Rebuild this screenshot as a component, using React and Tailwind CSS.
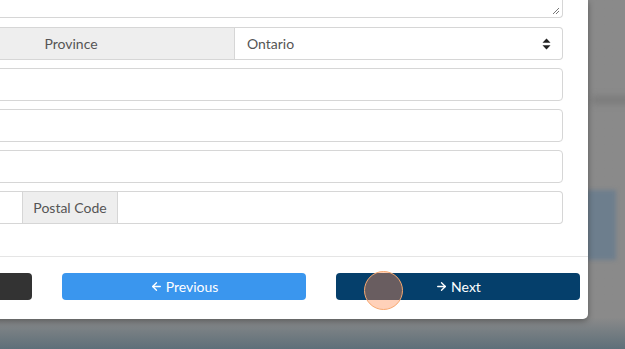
import React from "react";
import { ArrowLeft, ArrowRight } from "lucide-react";

const font = { fontFamily: "Lato, 'Open Sans', sans-serif" };

const Input = ({ className = "" }) => (
  <div className={`h-full bg-white border border-[#d6d6d6] ${className}`} />
);

const SortIcon = () => (
  <svg width="9" height="12" viewBox="0 0 9 12" className="fill-[#222]">
    <path d="M4.5 0.5 L8.5 4.8 L0.5 4.8 Z" />
    <path d="M4.5 11.5 L8.5 7.2 L0.5 7.2 Z" />
  </svg>
);

export default function App() {
  return (
    <div
      className="relative w-[625px] h-[349px] overflow-hidden bg-gradient-to-b from-[#8a8a8a] from-[91%] to-[#5e6f79] text-[14px]"
      style={font}
    >
      {/* blurred page behind the backdrop */}
      <div className="absolute left-[592px] top-[96px] w-[40px] h-[8px] bg-[#7b7b7b] blur-[3px]" />
      <div className="absolute left-[586px] top-[190px] w-[30px] h-[70px] bg-[#6d7e8d] blur-[2px]" />

      <div className="relative flex flex-col w-[848px] ml-[-260px] h-[319px] bg-white rounded-br-[5px] shadow-[0_2px_6px_rgba(0,0,0,0.35)]">
        <div className="flex flex-col gap-[8px] pr-[25px] pl-[167px]">
          {/* textarea tail */}
          <div className="relative h-[19px] mt-[-1px] mb-[1px] border border-t-0 border-[#d6d6d6] rounded-br-[4px]">
            <svg width="8" height="8" viewBox="0 0 8 8" className="absolute right-[2px] bottom-[2px] stroke-[#777]">
              <path d="M1 7 L7 1 M4 7 L7 4" strokeWidth="1" />
            </svg>
          </div>

          <div className="flex h-[33px]">
            <div className="flex-1 flex items-center justify-center bg-[#eeeeee] border border-[#d6d6d6] text-[#555]">
              Province
            </div>
            <div className="w-[328px] flex items-center justify-between pl-[12px] pr-[11px] border border-l-0 border-[#d6d6d6] rounded-r-[4px] text-[#555]">
              <span>Ontario</span>
              <SortIcon />
            </div>
          </div>

          <div className="h-[33px]">
            <Input className="rounded-r-[4px]" />
          </div>
          <div className="h-[33px]">
            <Input className="rounded-r-[4px]" />
          </div>
          <div className="h-[33px]">
            <Input className="rounded-r-[4px]" />
          </div>

          <div className="flex h-[33px]">
            <Input className="flex-1" />
            <div className="w-[95px] flex items-center justify-center bg-[#eeeeee] border border-l-0 border-[#d6d6d6] text-[#555]">
              Postal Code
            </div>
            <Input className="w-[445px] border-l-0 rounded-r-[4px]" />
          </div>
        </div>

        <div className="mt-[32px] border-t border-[#e5e5e5] flex justify-end gap-[30px] pt-[16px] pr-[8px]">
          <div className="w-[244px] h-[27px] rounded-[4px] bg-[#333333]" />
          <div className="w-[244px] h-[27px] rounded-[4px] bg-[#3a96ee] text-white flex items-center justify-center gap-[3px]">
            <ArrowLeft size={13} strokeWidth={2.5} />
            <span>Previous</span>
          </div>
          <div className="w-[244px] h-[27px] rounded-[4px] bg-[#053f6b] text-white flex items-center justify-center gap-[3px]">
            <ArrowRight size={13} strokeWidth={2.5} />
            <span>Next</span>
          </div>
        </div>
      </div>

      {/* click indicator */}
      <div className="absolute left-[364px] top-[271px] w-[39px] h-[39px] rounded-full border-[1.5px] border-[#f7a870] bg-[rgba(255,140,80,0.4)]" />
    </div>
  );
}
